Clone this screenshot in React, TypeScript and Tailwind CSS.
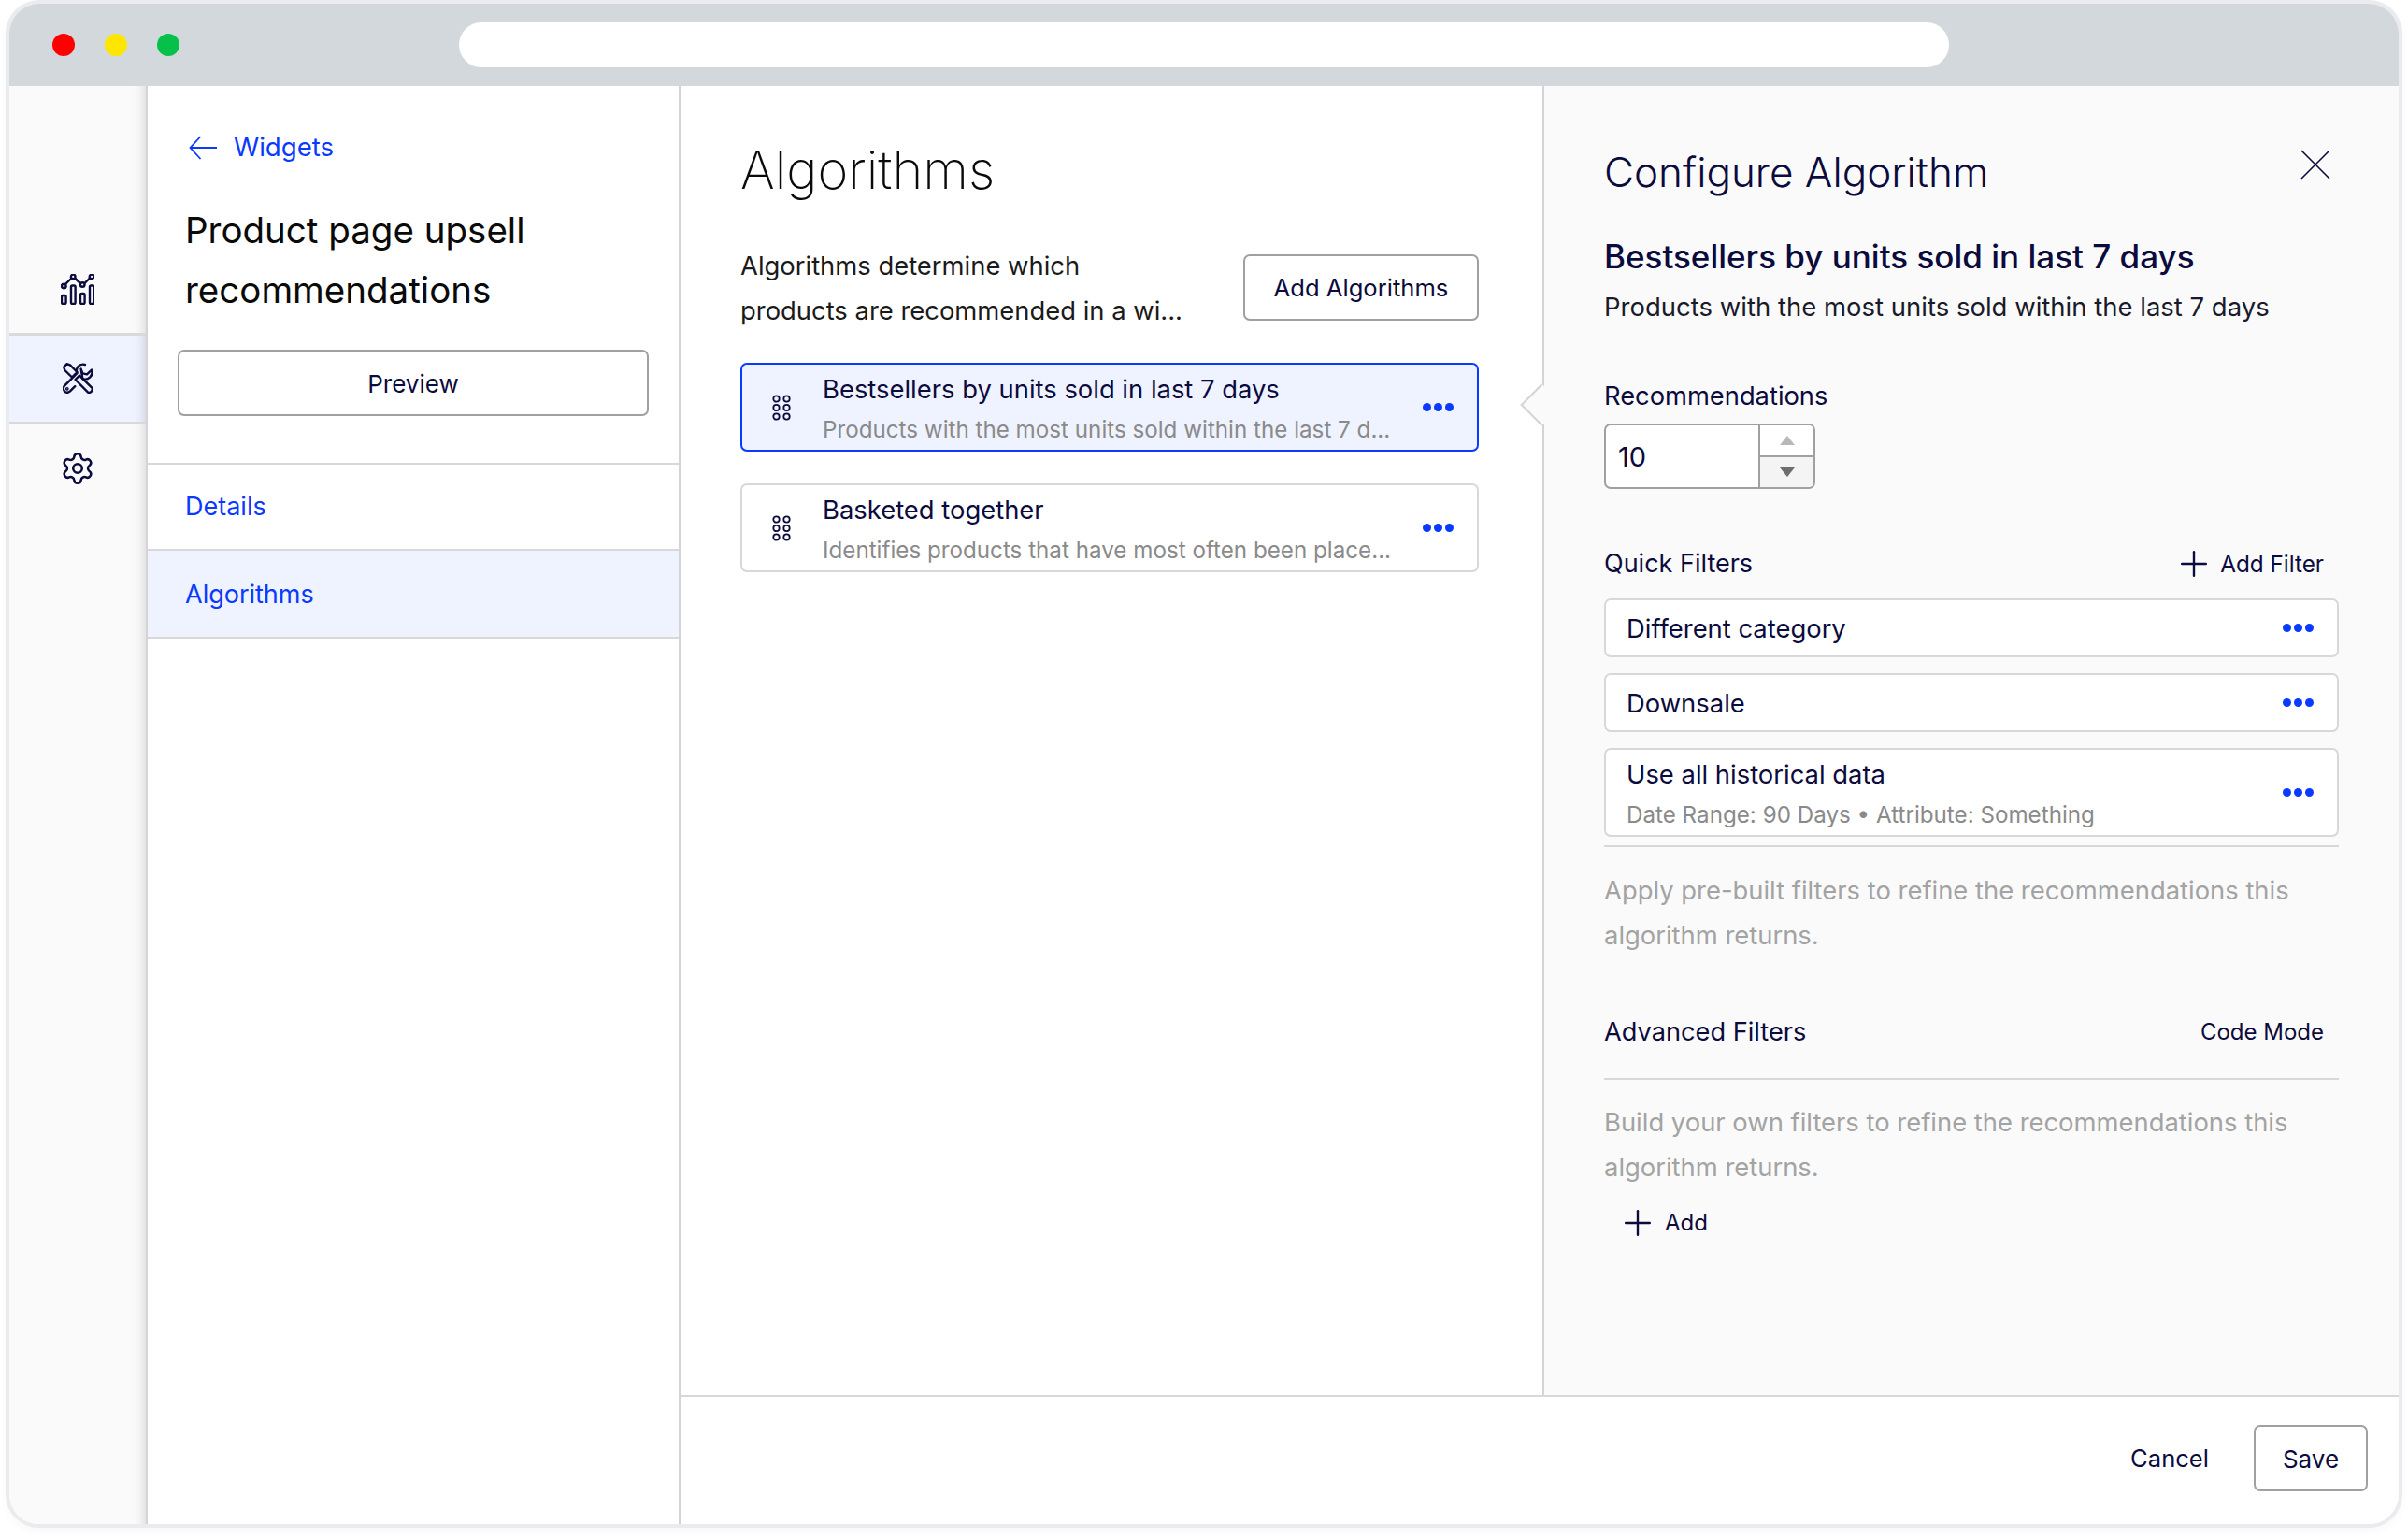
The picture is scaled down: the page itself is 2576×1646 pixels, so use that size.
import React from 'react';
import { Plus, Settings } from 'lucide-react';

const MoreDots = () => (
  <div className="flex gap-[3px]">
    <span className="h-[9px] w-[9px] rounded-full bg-[#0a3aff]"></span>
    <span className="h-[9px] w-[9px] rounded-full bg-[#0a3aff]"></span>
    <span className="h-[9px] w-[9px] rounded-full bg-[#0a3aff]"></span>
  </div>
);

const DragHandle = () => (
  <svg width="22" height="28" viewBox="0 0 22 28" fill="none" stroke="#0c0b3d" strokeWidth="1.8">
    <circle cx="5.5" cy="4.5" r="3.2" />
    <circle cx="16.5" cy="4.5" r="3.2" />
    <circle cx="5.5" cy="14" r="3.2" />
    <circle cx="16.5" cy="14" r="3.2" />
    <circle cx="5.5" cy="23.5" r="3.2" />
    <circle cx="16.5" cy="23.5" r="3.2" />
  </svg>
);

const ChartIcon = () => (
  <svg width="36" height="33" viewBox="0 0 36 33" fill="none" stroke="#0c0b3d" strokeWidth="2.4">
    <path d="M5 11 L11.5 4.5 M15 4.5 L21.5 10.5 M25 10.5 L31 4.5" />
    <circle cx="3.3" cy="13" r="2.3" />
    <circle cx="13.2" cy="2.9" r="2.3" />
    <circle cx="23.2" cy="11.5" r="2.3" />
    <circle cx="33" cy="2.9" r="2.3" />
    <rect x="1" y="23" width="4.6" height="9" rx="1.4" />
    <rect x="11" y="12.5" width="4.6" height="19.5" rx="1.4" />
    <rect x="21" y="21" width="4.6" height="11" rx="1.4" />
    <rect x="31" y="12.5" width="4.6" height="19.5" rx="1.4" />
  </svg>
);

const ToolsIcon = () => (
  <svg width="33" height="33" viewBox="0 0 33 33" fill="none" stroke="#0c0b3d" strokeWidth="2.4" strokeLinejoin="round" strokeLinecap="round">
    <path d="M1.2 4.6 L4.6 1.2 L8 2.4 L15.5 10 L10 15.5 L2.4 8 Z" />
    <path d="M18 13.6 L13.6 18 L26.6 31.2 C28 32.3 29.4 32 30.6 30.8 C32 29.4 32.3 28 31.2 26.6 Z" />
    <path d="M24 2 C18 0.4 13.2 5.4 15.4 11.2 L1.8 24.8 C0.4 26.8 0.8 29.4 2.4 30.8 C4 32.2 6.2 32 8 30.4 L13.2 25.2" />
    <path d="M21.4 17.2 C27.4 19 33.2 13.6 31 7.6 L26 12.4 L21.4 11.4 L19.6 6.6 Z" />
    <circle cx="4.8" cy="27.8" r="0.7" />
  </svg>
);

const NavIcon: React.FC<{ active?: boolean; children: React.ReactNode }> = ({ active, children }) => (
  <div className={`flex h-[95px] items-center justify-center border-b-[3px] border-[#d8d8dd] pb-[1px] shadow-[inset_-14px_0_12px_-12px_rgba(0,0,0,0.14)] ${active ? 'bg-[#eff2ff]' : 'bg-[#fafafa]'}`}>
    {children}
  </div>
);

const AlgorithmCard: React.FC<{ title: string; text: string; selected?: boolean }> = ({ title, text, selected }) => (
  <div className={`flex h-[95px] items-center rounded-[7px] border-2 pl-[31px] pr-[25px] ${selected ? 'border-[#0a3aff] bg-[#eff2ff]' : 'border-[#d8d8d8] bg-white'}`}>
    <DragHandle />
    <div className="ml-[33px] flex-1 pt-[3px]">
      <div className="text-[27.4px] leading-[38px] text-[#0c0b3d]">{title}</div>
      <div className="mt-[8px] text-[24.2px] leading-[34px] text-[#8a8a8a]">{text}</div>
    </div>
    <MoreDots />
  </div>
);

const FilterCard: React.FC<{ title: string; text?: string; tall?: boolean }> = ({ title, text, tall }) => (
  <div className={`flex items-center justify-between rounded-[7px] border-2 border-[#d8d8d8] bg-white pl-[22px] pr-[25px] ${tall ? 'h-[95px]' : 'h-[63px]'}`}>
    <div className={tall ? 'pt-[3px]' : 'pt-[1px]'}>
      <div className="text-[27.4px] leading-[38px] text-[#0c0b3d]">{title}</div>
      {text && <div className="mt-[8px] text-[24.2px] leading-[34px] text-[#8a8a8a]">{text}</div>}
    </div>
    <MoreDots />
  </div>
);

export default function App() {
  return (
    <div className="h-[1646px] w-[2576px] bg-white pl-[6px] font-[Inter,sans-serif]">
      <div className="flex h-[1634px] w-[2564px] flex-col overflow-hidden rounded-[36px] border-4 border-[#ebebef] shadow-[0_4px_10px_rgba(0,0,0,0.03)]">
        {/* browser chrome */}
        <div className="flex h-[88px] shrink-0 items-center bg-[#d3d8dc] pl-[46px]">
          <div className="flex gap-[32px]">
            <span className="h-[24px] w-[24px] rounded-full bg-[#ff0000]"></span>
            <span className="h-[24px] w-[24px] rounded-full bg-[#ffe600]"></span>
            <span className="h-[24px] w-[24px] rounded-full bg-[#05c14a]"></span>
          </div>
          <div className="ml-[299px] h-[48px] w-[1594px] rounded-full bg-white"></div>
        </div>

        <div className="flex min-h-0 flex-1">
          {/* icon rail */}
          <div className="w-[148px] shrink-0 border-r-2 border-[#d4d4d8] bg-[#fafafa] pt-[172px] shadow-[inset_-14px_0_12px_-12px_rgba(0,0,0,0.14)]">
            <NavIcon><ChartIcon /></NavIcon>
            <NavIcon active><ToolsIcon /></NavIcon>
            <div className="flex h-[95px] items-center justify-center pb-[2px]">
              <Settings size={38} strokeWidth={1.6} color="#0c0b3d" />
            </div>
          </div>

          {/* widget nav */}
          <div className="w-[570px] shrink-0 border-r-2 border-[#d4d4d8] bg-white">
            <div className="mt-[46px] flex h-[40px] items-center pl-[44px] text-[#0a3aff]">
              <svg width="30" height="26" viewBox="0 0 30 26" fill="none" stroke="currentColor" strokeWidth="1.8">
                <path d="M1.5 13 H30 M12.5 1 L1.5 13 L12.5 25" />
              </svg>
              <span className="ml-[18px] text-[27.6px]">Widgets</span>
            </div>
            <div className="mt-[36px] pl-[40px] text-[38.5px] leading-[64px] text-[#0a0a0a]">
              Product page upsell
              <br />
              recommendations
            </div>
            <button className="ml-[32px] mt-[32px] block h-[71px] w-[504px] rounded-[7px] border-2 border-[#a0a0a0] pt-[2px] text-[26px] text-[#0c0b3d]">
              Preview
            </button>
            <div className="mt-[50px] flex h-[94px] items-center border-y-2 border-[#d8d8d8] pl-[40px] pt-[1px] text-[27px] text-[#0a3aff]">
              Details
            </div>
            <div className="flex h-[94px] items-center border-b-2 border-[#d8d8d8] bg-[#eff2ff] pl-[40px] pt-[2px] text-[27px] text-[#0a3aff]">
              Algorithms
            </div>
          </div>

          <div className="flex min-w-0 flex-1 flex-col">
            <div className="flex min-h-0 flex-1">
              {/* algorithm list */}
              <div className="w-[924px] shrink-0 border-r-2 border-[#d4d4d8] pl-[64px] pr-[68px] pt-[55px]">
                <div className="h-[70px] text-[56px] font-extralight leading-[70px] text-[#0a0a0a]">Algorithms</div>
                <div className="mt-[43px] flex h-[96px] justify-between">
                  <div className="text-[27.4px] leading-[48px] text-[#1a1a1a]">
                    Algorithms determine which
                    <br />
                    products are recommended in a wi...
                  </div>
                  <button className="mt-[12px] h-[71px] w-[252px] rounded-[7px] border-2 border-[#a0a0a0] pt-[2px] text-[25.6px] text-[#0c0b3d]">
                    Add Algorithms
                  </button>
                </div>
                <div className="mt-[32px] flex flex-col gap-[34px]">
                  <AlgorithmCard selected title="Bestsellers by units sold in last 7 days" text="Products with the most units sold within the last 7 d..." />
                  <AlgorithmCard title="Basketed together" text="Identifies products that have most often been place..." />
                </div>
              </div>

              {/* configure panel */}
              <div className="relative flex-1 bg-[#fafafa] pl-[64px] pr-[64px] pt-[62px]">
                <div className="absolute left-[-19px] top-[325px] h-[32px] w-[32px] rotate-45 border-b-2 border-l-2 border-[#d4d4d8] bg-[#fafafa]"></div>
                <div className="flex items-start justify-between pr-[9px]">
                  <div className="text-[44px] font-light leading-[60px] text-[#0c0b3d]">Configure Algorithm</div>
                  <svg width="32" height="32" viewBox="0 0 32 32" fill="none" stroke="#0c0b3d" strokeWidth="1.6" className="mt-[6px]">
                    <path d="M1 1 L31 31 M31 1 L1 31" />
                  </svg>
                </div>
                <div className="mt-[36px] text-[35px] font-medium leading-[48px] text-[#0c0b3d]">Bestsellers by units sold in last 7 days</div>
                <div className="mt-[6px] text-[27.5px] leading-[48px] text-[#1a1a2a]">Products with the most units sold within the last 7 days</div>

                <div className="mt-[52px] text-[27.3px] leading-[40px] text-[#0c0b3d]">Recommendations</div>
                <div className="mt-[9px] flex h-[70px] w-[226px] overflow-hidden rounded-[7px] border-2 border-[#a0a0a0] bg-white">
                  <div className="flex w-[165px] items-center border-r-2 border-[#a0a0a0] pl-[13px] pt-[1px] text-[29px] text-[#0c0b3d]">10</div>
                  <div className="flex flex-1 flex-col">
                    <div className="flex flex-1 items-center justify-center border-b-2 border-[#a0a0a0] bg-white">
                      <div className="h-0 w-0 border-x-[8px] border-b-[10px] border-x-transparent border-b-[#b8b8b8]"></div>
                    </div>
                    <div className="flex flex-1 items-center justify-center bg-[#f4f4f4]">
                      <div className="h-0 w-0 border-x-[8px] border-t-[10px] border-x-transparent border-t-[#6e6e6e]"></div>
                    </div>
                  </div>
                </div>

                <div className="mt-[60px] flex h-[40px] items-center justify-between pr-[16px]">
                  <div className="text-[27px] text-[#0c0b3d]">Quick Filters</div>
                  <div className="flex items-center gap-[6px] text-[24.3px] text-[#0c0b3d]">
                    <Plus size={44} strokeWidth={1.3} />
                    Add Filter
                  </div>
                </div>
                <div className="mt-[17px] flex flex-col gap-[17px]">
                  <FilterCard title="Different category" />
                  <FilterCard title="Downsale" />
                  <FilterCard tall title="Use all historical data" text="Date Range: 90 Days • Attribute: Something" />
                </div>
                <div className="mt-[9px] h-[2px] bg-[#d8d8d8]"></div>
                <div className="mt-[22px] text-[27.4px] leading-[48px] text-[#a3a3a3]">
                  Apply pre-built filters to refine the recommendations this algorithm returns.
                </div>

                <div className="mt-[60px] flex h-[40px] items-center justify-between pr-[16px]">
                  <div className="text-[27.2px] text-[#0c0b3d]">Advanced Filters</div>
                  <div className="text-[24px] text-[#0c0b3d]">Code Mode</div>
                </div>
                <div className="mt-[29px] h-[2px] bg-[#d8d8d8]"></div>
                <div className="mt-[21px] text-[27.4px] leading-[48px] text-[#a3a3a3]">
                  Build your own filters to refine the recommendations this algorithm returns.
                </div>
                <div className="ml-[14px] mt-[16px] flex h-[40px] items-center gap-[7px] text-[24px] text-[#0c0b3d]">
                  <Plus size={44} strokeWidth={1.3} />
                  Add
                </div>
              </div>
            </div>

            {/* footer */}
            <div className="flex h-[138px] shrink-0 items-center justify-end border-t-2 border-[#d8d8d8] bg-white pb-[5px] pr-[33px]">
              <span className="mr-[48px] pt-[2px] text-[25.6px] text-[#0c0b3d]">Cancel</span>
              <button className="h-[71px] w-[122px] rounded-[7px] border-2 border-[#a0a0a0] pt-[2px] text-[26px] text-[#0c0b3d]">Save</button>
            </div>
          </div>
        </div>
      </div>
    </div>
  );
}
